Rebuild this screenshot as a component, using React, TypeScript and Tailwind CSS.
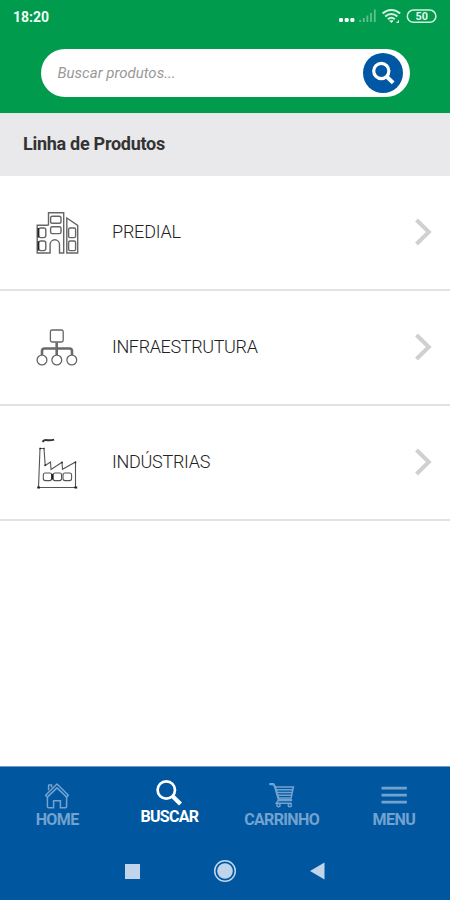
import type { ReactNode } from "react";

type Line = {
  id: number;
  title: string;
  tracking: string;
  icon: ReactNode;
};

type Tab = {
  label: string;
  tracking: string;
  active?: boolean;
  icon: ReactNode;
};

function BuildingIcon() {
  return (
    <svg viewBox="0 0 46 46" className="h-[46px] w-[46px]" fill="none" stroke="#666" strokeWidth="1.4">
      <path d="M14.5 15.3V2.7H29.7V43H25.5V34.5a4.7 4.7 0 0 0-9.4 0V43H3.2V15.3H14.5" />
      <path d="M32.8 43V8l10.9 7.3V43z" />
      <rect x="16.6" y="6.2" width="10.4" height="7" rx="1.8" />
      <rect x="16.6" y="16.8" width="10.4" height="6.8" rx="1.6" />
      <rect x="4.8" y="18" width="7" height="9.6" rx="2" />
      <rect x="4.8" y="31" width="7" height="9.6" rx="2" />
      <rect x="34.6" y="18" width="7" height="9.6" rx="1.4" />
      <rect x="34.6" y="31" width="7" height="9.6" rx="1.4" />
      <path d="M4.3 18v9.4M4.3 31.2v9.4" stroke="#222" strokeWidth="1.5" />
    </svg>
  );
}

function NetworkIcon() {
  return (
    <svg viewBox="0 0 46 46" className="h-[46px] w-[46px]" fill="none" stroke="#666" strokeWidth="1.3">
      <rect x="16.4" y="5" width="12.8" height="12" rx="1.8" />
      <path d="M22.7 17.4v14.5M8 31v-5a2.5 2.5 0 0 1 2.5-2.5h25a2.5 2.5 0 0 1 2.5 2.5v5" stroke="#6a6a6a" strokeWidth="2.6" />
      <circle cx="8" cy="35" r="4.9" fill="#fff" />
      <circle cx="22.8" cy="35" r="4.9" fill="#fff" />
      <circle cx="37.8" cy="35" r="4.9" fill="#fff" />
    </svg>
  );
}

function FactoryIcon() {
  return (
    <svg viewBox="0 0 46 54" className="h-[54px] w-[46px]" fill="none" stroke="#555" strokeWidth="1.1">
      <path d="M4.5 51.5 6 12.5h4l1.2 17L16.5 26l.5 7.5L28 26.3l.5 7L41.5 26v25.5z" />
      <path d="M8.5 5.9c2-2.7 4-1.8 5.6-1.6 2 .2 3.7.1 6-.7" stroke="#333" strokeWidth="2" />
      <rect x="9.3" y="37" width="8.4" height="7.6" rx="2" />
      <rect x="19" y="37" width="8.6" height="7.6" rx="2" />
      <rect x="29" y="37" width="8.6" height="7.6" rx="2" />
      <path d="M3.2 51.5h2.8M40.4 51.5h2.8M18.3 38v5.5" stroke="#222" strokeWidth="2.2" />
      <path d="M5.5 12.5h1.5M9.5 12.5h1M10.5 29.3h1.5M27.3 26.5h1.4M40.8 26.5h1.4" stroke="#222" strokeWidth="1.6" />
    </svg>
  );
}

function HomeIcon() {
  return (
    <svg viewBox="0 0 26 28" className="h-7 w-[26px]" fill="none" stroke="currentColor" strokeWidth="1.5">
      <path d="M4.6 8.3V3h3v2.4M1.6 13.2 13 2l11.4 11.2-1.7 1.9L13 5.9 3.3 15.1z" strokeLinejoin="round" />
      <path d="M3.4 14.7v9.8a1.2 1.2 0 0 0 1.2 1.2h5v-7h6.8v7h5a1.2 1.2 0 0 0 1.2-1.2v-9.8" />
    </svg>
  );
}

function CartIcon() {
  return (
    <svg viewBox="0 0 28 28" className="h-7 w-7" fill="none" stroke="currentColor" strokeWidth="1.5">
      <path d="M2.1 2.2h3.2L7 4.7l3.9 13.4h12.4" strokeWidth="2.2" strokeLinecap="round" />
      <path d="M7 4.9h18.4l-2.3 11H9.9M7.9 7.8h16.7M8.6 10.6H24M9.5 13.3h14" />
      <path d="M10.3 18.3 8.3 21.3h15.4" strokeWidth="1.5" />
      <circle cx="10.5" cy="23.2" r="1.6" />
      <circle cx="21.8" cy="23.2" r="1.6" />
    </svg>
  );
}

function StatusIcons() {
  return (
    <svg viewBox="0 0 102 18" className="h-[18px] w-[102px]" fill="none">
      <g fill="#f2fff7">
        <rect x="2" y="11" width="4" height="4" rx="1.2" />
        <rect x="7.7" y="11" width="4" height="4" rx="1.2" />
        <rect x="13.4" y="11" width="4" height="4" rx="1.2" />
      </g>
      <path d="M23.2 15v-2M26.8 15v-4M30.4 15V8.5M34 15V6M37.8 15V2.5" stroke="#5fc08d" strokeWidth="1.8" />
      <g stroke="#d3f2e1" strokeWidth="2.1">
        <path d="M45.6 6.6c5-4.9 12.5-4.9 17.5 0M48.2 9.5c3.5-3.3 8.7-3.3 12.2 0M50.9 12.2c2-1.9 4.9-1.9 6.9 0" />
        <path d="M52.7 13.8 54.4 15.6l1.7-1.8z" fill="#d3f2e1" strokeWidth="1" />
      </g>
      <path d="M59.4 15.3h2v-2" stroke="#c9eeda" strokeWidth="1.2" />
      <rect x="70.3" y="3.1" width="28.6" height="12.2" rx="6.1" stroke="#d3f2e1" strokeWidth="1.5" />
      <text x="84.7" y="13" textAnchor="middle" fill="#e4f8ed" fontFamily="Roboto, sans-serif" fontSize="10.8" fontWeight="700">
        50
      </text>
    </svg>
  );
}

const lines: Line[] = [
  { id: 1, title: "PREDIAL", tracking: "tracking-[-0.2px]", icon: <BuildingIcon /> },
  { id: 2, title: "INFRAESTRUTURA", tracking: "tracking-[-0.36px]", icon: <NetworkIcon /> },
  { id: 3, title: "INDÚSTRIAS", tracking: "tracking-[-0.28px]", icon: <FactoryIcon /> },
];

const tabs: Tab[] = [
  { label: "HOME", tracking: "tracking-[-0.6px]", icon: <HomeIcon /> },
  {
    label: "BUSCAR",
    tracking: "tracking-[-0.75px]",
    active: true,
    icon: (
      <svg viewBox="0 0 28 28" className="h-7 w-7" fill="none" stroke="currentColor">
        <circle cx="11.3" cy="11" r="8.7" strokeWidth="2.7" />
        <path d="m17.6 17.3 7.9 7.8" strokeWidth="4.2" />
      </svg>
    ),
  },
  { label: "CARRINHO", tracking: "tracking-[-0.65px]", icon: <CartIcon /> },
  {
    label: "MENU",
    tracking: "tracking-[-0.5px]",
    icon: (
      <svg viewBox="0 0 28 28" className="h-7 w-7" stroke="currentColor" strokeWidth="2.8">
        <path d="M1.5 6.2h25.3M1.5 13.1h25.3M1.5 20.1h25.3" />
      </svg>
    ),
  },
];

export default function App() {
  return (
    <div className="flex h-[900px] w-[450px] flex-col overflow-hidden bg-white font-['Roboto',sans-serif]">
      <header className="h-[113px] shrink-0 bg-[#009b4d]">
        <div className="flex h-[49px] items-start justify-between pt-[7px] pr-[11px] pl-[13px]">
          <span className="pt-px text-[14px] leading-[18px] font-bold text-[#effff6]">18:20</span>
          <StatusIcons />
        </div>
        <div className="mx-auto flex h-12 w-[369px] items-center justify-between rounded-full bg-white pr-[7px] pl-[17px]">
          <span className="text-[15px] text-[#999] italic">Buscar produtos...</span>
          <button className="flex h-10 w-10 items-center justify-center rounded-full bg-[#0057a3] text-white">
            <svg viewBox="0 0 24 24" className="h-6 w-6" fill="none" stroke="currentColor">
              <circle cx="10.3" cy="10" r="7.6" strokeWidth="3.2" />
              <path d="m15.3 15.3 6.9 6.6" strokeWidth="4" />
            </svg>
          </button>
        </div>
      </header>

      <div className="flex h-[63px] shrink-0 items-center border-t border-[#d4eedf] bg-[#e9e9eb] pb-[3px] pl-[23px]">
        <h1 className="text-[18px] font-bold tracking-[-0.28px] text-[#333]">Linha de Produtos</h1>
      </div>

      <main className="flex-1">
        {lines.map((line) => (
          <div
            key={line.id}
            className="flex h-[115px] items-center border-b-2 border-[#e2e2e2] pr-[18px] pb-[2px] pl-[34px]"
          >
            <div className="flex w-[78px] shrink-0 items-center pt-[2px]">{line.icon}</div>
            <span className={`flex-1 text-[18px] font-light text-[#222] ${line.tracking}`}>{line.title}</span>
            <svg viewBox="0 0 18 28" className="h-7 w-[18px]" fill="none" stroke="#d0d0d0" strokeWidth="4">
              <path d="M2.5 2 14.8 14 2.5 26" />
            </svg>
          </div>
        ))}
      </main>

      <footer className="h-[134px] shrink-0 border-t border-[#6f9cc8] bg-[#0057a0]">
        <nav className="grid h-[75px] grid-cols-4 pl-px">
          {tabs.map((tab) => (
            <div
              key={tab.label}
              className={`flex flex-col items-center ${tab.active ? "pt-3 text-white" : "pt-[15px] text-[#72a3d0]"}`}
            >
              {tab.icon}
              <span className={`text-[16px] leading-5 font-bold ${tab.tracking}`}>{tab.label}</span>
            </div>
          ))}
        </nav>
        <div className="flex h-[58px] items-center justify-center gap-[73px] text-[#c1d5ea]">
          <div className="h-[15px] w-[15px] bg-current" />
          <svg viewBox="0 0 24 24" className="h-6 w-6">
            <circle cx="12" cy="12" r="10.3" fill="none" stroke="currentColor" strokeWidth="1.5" />
            <circle cx="12" cy="12" r="7.8" fill="currentColor" />
          </svg>
          <svg viewBox="0 0 15 18" className="h-[18px] w-[15px]" fill="currentColor">
            <path d="M0 9 14.5.5v17z" />
          </svg>
        </div>
      </footer>
    </div>
  );
}
